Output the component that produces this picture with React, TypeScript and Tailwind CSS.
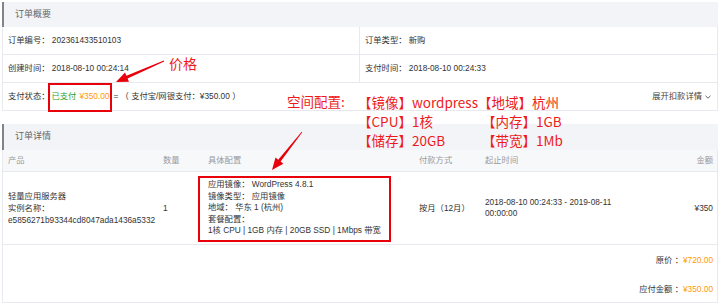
import React from 'react';

const font = { fontFamily: '"Liberation Sans", "Noto Sans CJK SC", sans-serif' };
const cjk = { fontFamily: '"Noto Sans CJK SC", "Liberation Sans", sans-serif' };

function SectionHeader({ title, h }: { title: string; h: string }) {
  return (
    <div className={`${h} bg-[#f3f4f8] border-l-[2px] border-[#80828d] flex items-center pl-[11px] text-[9px] text-[#666]`}>
      {title}
    </div>
  );
}

const cols = 'grid grid-cols-[155px_45px_211px_66px_1fr_auto] pl-[5px] pr-[4px]';

export default function App() {
  return (
    <div className="relative w-[720px] h-[305px] bg-white overflow-hidden text-[8.3px] text-[#333]" style={font}>
      <div className="mx-[2px] pt-[2px]">
        {/* 订单概要 */}
        <SectionHeader title="订单概要" h="h-[25px]" />
        <div className="border border-t-0 border-[#e7e9ee]">
          <div className="grid grid-cols-[357px_1fr] h-[28px] border-b border-[#e7e9ee]">
            <div className="flex items-center pl-[5px] border-r border-[#e7e9ee]">订单编号：&nbsp;202361433510103</div>
            <div className="flex items-center pl-[5px]">订单类型：&nbsp;新购</div>
          </div>
          <div className="grid grid-cols-[357px_1fr] h-[28px] border-b border-[#e7e9ee]">
            <div className="flex items-center pl-[5px] border-r border-[#e7e9ee]">创建时间：&nbsp;2018-08-10 00:24:14</div>
            <div className="flex items-center pl-[5px]">支付时间：&nbsp;2018-08-10 00:24:33</div>
          </div>
          <div className="flex items-center justify-between h-[27px] pl-[5px] pr-[6px]">
            <div className="flex items-center">
              <span>支付状态：</span>
              <span className="ml-[2px] text-[#2ea121]">已支付</span>
              <span className="ml-[3px] text-[#ff9a00]">¥350.00</span>
              <span className="ml-[4px]">= （ 支付宝/网银支付：¥350.00 ）</span>
            </div>
            <div className="flex items-center gap-[3px] text-[#444]">
              展开扣款详情
              <svg width="6" height="4" viewBox="0 0 6 4" fill="none" stroke="#666" strokeWidth="1">
                <path d="M0.5 0.8 L3 3.2 L5.5 0.8" />
              </svg>
            </div>
          </div>
        </div>

        {/* 订单详情 */}
        <div className="mt-[13px]">
          <SectionHeader title="订单详情" h="h-[26px]" />
          <div className="border border-t-0 border-[#e7e9ee]">
            <div className={`${cols} h-[22px] items-center bg-[#f7f8fa] border-b border-[#e7e9ee] text-[#9a9a9a]`}>
              <div>产品</div>
              <div>数量</div>
              <div>具体配置</div>
              <div>付款方式</div>
              <div>起止时间</div>
              <div className="text-right">金额</div>
            </div>
            <div className={`${cols} h-[73px] items-center border-b border-[#e7e9ee] leading-[12px]`}>
              <div>
                <div>轻量应用服务器</div>
                <div>实例名称：</div>
                <div>e5856271b93344cd8047ada1436a5332</div>
              </div>
              <div>1</div>
              <div className="leading-[11.5px]">
                <div>应用镜像：&nbsp;WordPress 4.8.1</div>
                <div>镜像类型：&nbsp;应用镜像</div>
                <div>地域：&nbsp;华东 1 (杭州)</div>
                <div>套餐配置：</div>
                <div>1核 CPU | 1GB 内存 | 20GB SSD | 1Mbps 带宽</div>
              </div>
              <div>按月（12月）</div>
              <div className="leading-[11px]">
                2018-08-10 00:24:33 - 2019-08-11
                <br />
                00:00:00
              </div>
              <div className="text-right">¥350</div>
            </div>
            <div className="h-[57px] flex flex-col items-end pr-[4px]">
              <div className="h-[30px] flex items-center pt-[1px]">
                原价 ：<span className="text-[#ff9a00]">¥720.00</span>
              </div>
              <div className="h-[27px] flex items-center pt-[2px]">
                应付金额 ：<span className="text-[#ff9a00]">¥350.00</span>
              </div>
            </div>
          </div>
        </div>
      </div>

      {/* annotations */}
      <div className="absolute left-[48px] top-[83px] w-[64px] h-[29px] border-[2px] border-[#e8000b]" />
      <div className="absolute left-[198px] top-[176px] w-[193px] h-[66px] border-[2px] border-[#e8000b]" />

      <div className="absolute left-[169px] top-[53px] text-[14px] leading-[20px] text-[#ee1a1a]" style={cjk}>价格</div>
      <div className="absolute left-[287px] top-[92px] text-[13.5px] leading-[19px] text-[#ee1a1a]" style={cjk}>空间配置:</div>
      <div className="absolute left-[358px] top-[93px] text-[13.5px] leading-[19px] text-[#ee1a1a] whitespace-nowrap" style={cjk}>
        <div>【镜像】wordpress【地域】杭州</div>
        <div>
          <span className="inline-block w-[124px]">【CPU】1核</span>【内存】1GB
        </div>
        <div>
          <span className="inline-block w-[124px]">【储存】20GB</span>【带宽】1Mb
        </div>
      </div>

      <svg className="absolute left-0 top-0" width="720" height="305" viewBox="0 0 720 305">
        <polygon
          fill="#e8000b"
          points="164.2,61.4 127.6,78.6 129,81.8 116,82 125,72.6 126.4,75.8 163.8,60.6"
        />
        <polygon
          fill="#e8000b"
          points="302.3,132.2 280.6,161.5 283.3,163.7 272,170 275.5,157.5 278.2,159.7 301.7,131.8"
        />
      </svg>
    </div>
  );
}
